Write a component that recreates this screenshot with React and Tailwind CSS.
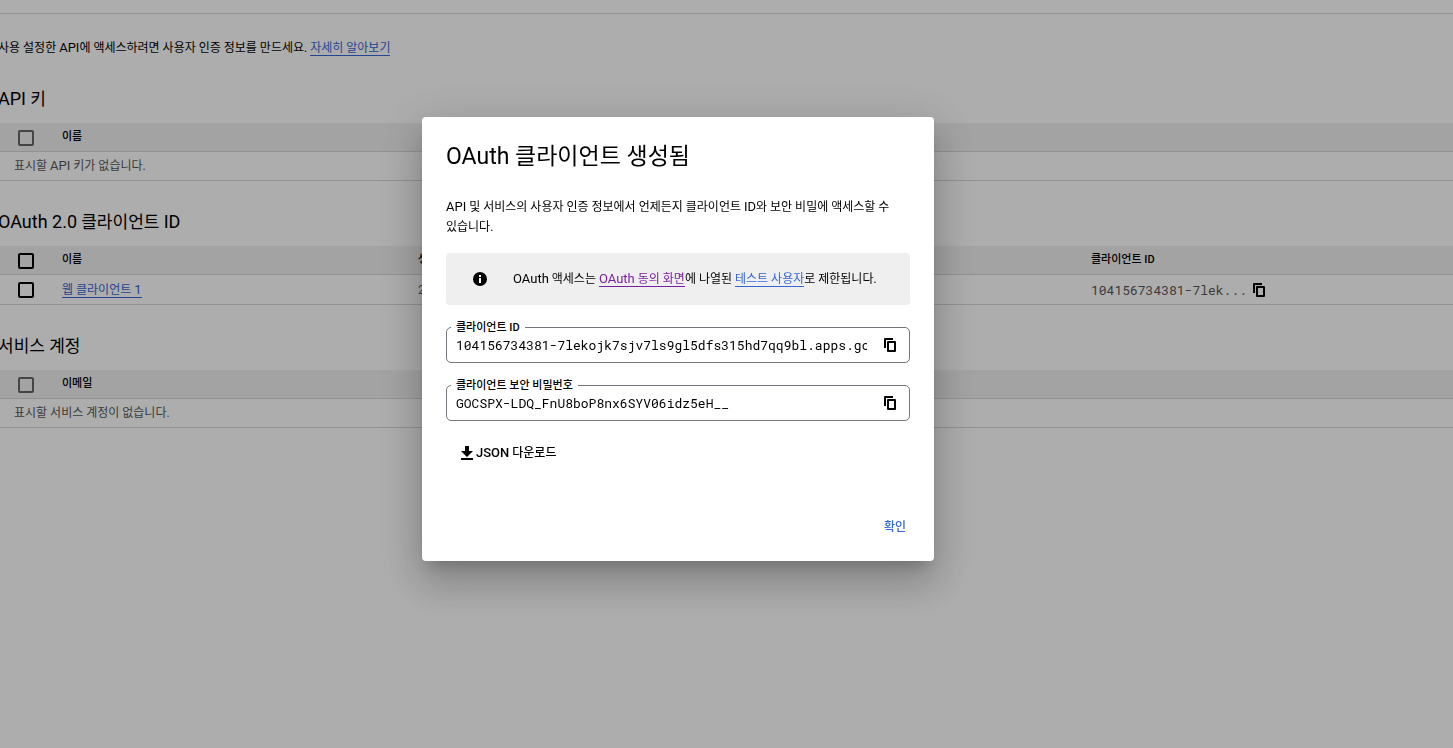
import React, { useState } from 'react';

const CLIENT_ID = '104156734381-7lekojk7sjv7ls9gl5dfs315hd7qq9bl.apps.googleusercontent.com';
const CLIENT_SECRET = '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';

const CopyIcon = () => (
  <svg className="w-3 h-3.5" viewBox="0 0 12 14" fill="currentColor" aria-hidden="true">
    <path d="M1 0h8v2H2v8H0V1a1 1 0 0 1 1-1z" />
    <path
      fillRule="evenodd"
      d="M4 3h7a1 1 0 0 1 1 1v9a1 1 0 0 1-1 1H4a1 1 0 0 1-1-1V4a1 1 0 0 1 1-1zm1 2v7h5V5z"
    />
  </svg>
);

const InfoIcon = () => (
  <svg className="w-3.5 h-3.5 shrink-0" viewBox="0 0 14 14" aria-hidden="true">
    <circle cx="7" cy="7" r="7" fill="#000" />
    <path d="M6 3h2v2H6zM6 6h2v5H6z" fill="#fff" />
  </svg>
);

const DownloadIcon = () => (
  <svg className="w-3 h-3.5" viewBox="0 0 12 14" fill="currentColor" aria-hidden="true">
    <path d="M4 0h4v5h4l-6 6-6-6h4zM0 12h12v2H0z" />
  </svg>
);

// Latin words are set one step larger than the Korean around them
const En = ({ children }) => <span className="text-[13px]">{children}</span>;
const HeadingEn = ({ children }) => <span className="text-lg leading-7">{children}</span>;

const Checkbox = ({ label, disabled }) => (
  <input
    type="checkbox"
    aria-label={label}
    disabled={disabled}
    className="block appearance-none w-4 h-4 border-2 border-black rounded-xs checked:bg-black disabled:border-[#666666]"
  />
);

const SelectAllCell = ({ disabled }) => (
  <th className="w-16 p-0 pt-0.5 pl-5">
    <Checkbox label="모두 선택" disabled={disabled} />
  </th>
);

const Section = ({ title, children }) => (
  <section>
    <h2 className="mb-2.5 text-[17px] leading-7">{title}</h2>
    <table className="w-full table-fixed border-collapse leading-5">{children}</table>
  </section>
);

// Table that only has a header and an empty message
const EmptySection = ({ title, column, message }) => (
  <Section title={title}>
    <thead>
      <tr className="h-7 bg-[#f1f1f1] border-b border-[#d8d8d8]">
        <SelectAllCell disabled />
        <th scope="col" className="p-0 text-left text-[11px] leading-5 font-medium">
          {column}
        </th>
      </tr>
    </thead>
    <tbody>
      <tr className="h-[29px] border-b border-[#d8d8d8]">
        <td colSpan={2} className="p-0 pl-4 text-[#585858]">
          {message}
        </td>
      </tr>
    </tbody>
  </Section>
);

const CopyField = ({ id, label, value }) => (
  <div className="relative flex items-center h-9 border border-[#72777d] rounded-[5px]">
    <label
      htmlFor={id}
      className="absolute left-1 -top-2 px-[5px] bg-white text-[11px] leading-4 font-medium"
    >
      {label}
    </label>
    <input
      id={id}
      type="text"
      readOnly
      value={value}
      className="flex-1 min-w-0 ml-[9px] mr-[17px] bg-transparent font-['Roboto_Mono','DejaVu_Sans_Mono',monospace] text-[13px] leading-5 outline-none"
    />
    <button
      type="button"
      aria-label={`${label} 복사`}
      onClick={() => navigator.clipboard?.writeText(value)}
      className="mr-[13px] cursor-pointer"
    >
      <CopyIcon />
    </button>
  </div>
);

const ClientCreatedDialog = ({ onClose }) => (
  <div className="fixed inset-0 flex items-center justify-center pr-[97px] pb-[70px] bg-black/32">
    <div
      role="dialog"
      aria-modal="true"
      aria-labelledby="dialog-title"
      className="w-full max-w-lg p-6 bg-white rounded shadow-[0_11px_15px_-7px_rgba(0,0,0,0.2),0_24px_38px_3px_rgba(0,0,0,0.14),0_9px_46px_8px_rgba(0,0,0,0.12)]"
    >
      <h1 id="dialog-title" className="text-[23px] leading-8">
        OAuth 클라이언트 생성됨
      </h1>
      <p className="mt-6 leading-5 break-keep">
        <En>API</En> 및 서비스의 사용자 인증 정보에서 언제든지 클라이언트 <En>ID</En>와 보안 비밀에
        액세스할 수 있습니다.
      </p>

      <div className="flex items-center gap-[26px] mt-4 py-4 pl-[27px] pr-4 bg-[#efefef] rounded leading-5">
        <InfoIcon />
        <p>
          <En>OAuth</En> 액세스는{' '}
          <a href="#consent" className="border-b border-[#7b1fa2] text-[#7b1fa2]">
            <En>OAuth</En> 동의 화면
          </a>
          에 나열된{' '}
          <a href="#testers" className="border-b border-[#3367d6] text-[#3367d6]">
            테스트 사용자
          </a>
          로 제한됩니다.
        </p>
      </div>

      <div className="flex flex-col gap-[22px] mt-[22px]">
        <CopyField id="client-id" label="클라이언트 ID" value={CLIENT_ID} />
        <CopyField id="client-secret" label="클라이언트 보안 비밀번호" value={CLIENT_SECRET} />
      </div>

      <button
        type="button"
        className="flex items-center gap-[3px] mt-[22px] ml-[15px] leading-5 font-medium cursor-pointer"
      >
        <DownloadIcon />
        <span>
          <En>JSON</En> 다운로드
        </span>
      </button>

      <div className="flex justify-end mt-[54px]">
        <button
          type="button"
          onClick={onClose}
          className="px-1 leading-5 font-medium text-[#3367d6] cursor-pointer"
        >
          확인
        </button>
      </div>
    </div>
  </div>
);

const App = () => {
  const [open, setOpen] = useState(true);

  return (
    <div className="min-h-screen overflow-x-hidden bg-white text-black font-[Roboto,'Noto_Sans_CJK_KR',sans-serif] text-xs">
      <header className="h-3.5 border-b border-[#d8d8d8]" />

      <main className="flex flex-col gap-[27px] -ml-0.5 pt-6">
        <p className="leading-5">
          사용 설정한 <En>API</En>에 액세스하려면 사용자 인증 정보를 만드세요.{' '}
          <a href="#learn-more" className="border-b border-[#3367d6] text-[#3367d6]">
            자세히 알아보기
          </a>
        </p>

        <EmptySection
          title={<><HeadingEn>API</HeadingEn> 키</>}
          column="이름"
          message={<>표시할 <En>API</En> 키가 없습니다.</>}
        />

        <Section
          title={<><HeadingEn>OAuth 2.0</HeadingEn> 클라이언트 <HeadingEn>ID</HeadingEn></>}
        >
          <thead>
            <tr className="h-[29px] bg-[#f1f1f1] border-b border-[#d8d8d8] text-[11px] leading-5">
              <SelectAllCell />
              <th scope="col" className="w-[356px] p-0 text-left font-medium">
                이름
              </th>
              <th scope="col" className="w-[673px] p-0 text-left font-medium">
                생성일
              </th>
              <th scope="col" className="p-0 text-left font-medium">
                클라이언트 ID
              </th>
            </tr>
          </thead>
          <tbody>
            <tr className="h-[30px] border-b border-[#d8d8d8]">
              <td className="p-0 pl-5">
                <Checkbox label="웹 클라이언트 1" />
              </td>
              <td className="p-0">
                <a href="#client" className="border-b border-[#3367d6] text-[#3367d6]">
                  웹 클라이언트 <En>1</En>
                </a>
              </td>
              <td className="p-0 text-[#585858]">2024. 5. 7.</td>
              <td className="p-0">
                <div className="flex items-center gap-1.5">
                  <span className="font-['Roboto_Mono','DejaVu_Sans_Mono',monospace] text-[13px] text-[#585858]">
                    104156734381-7lek...
                  </span>
                  <button type="button" aria-label="클라이언트 ID 복사" className="cursor-pointer">
                    <CopyIcon />
                  </button>
                </div>
              </td>
            </tr>
          </tbody>
        </Section>

        <EmptySection title="서비스 계정" column="이메일" message="표시할 서비스 계정이 없습니다." />
      </main>

      {open && <ClientCreatedDialog onClose={() => setOpen(false)} />}
    </div>
  );
};

export default App;
